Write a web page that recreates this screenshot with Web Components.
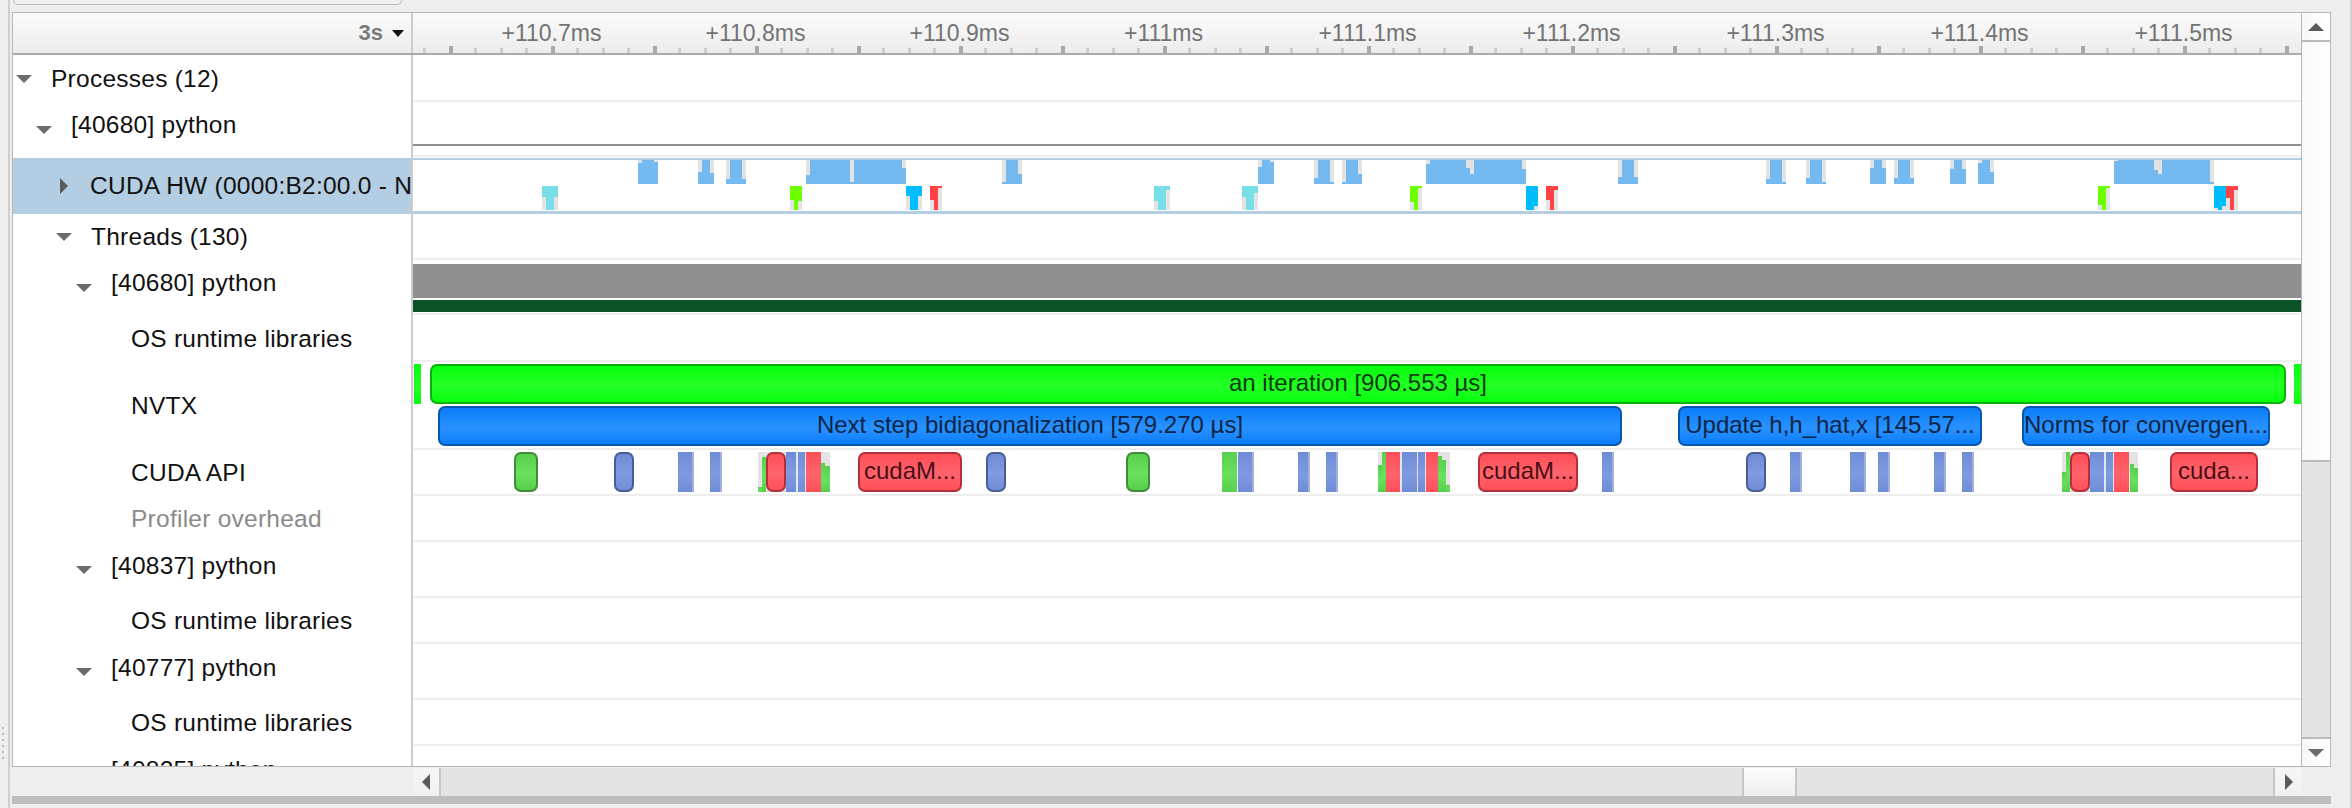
<!DOCTYPE html>
<html>
<head>
<meta charset="utf-8">
<title>Timeline</title>
<style>
  html, body { margin: 0; padding: 0; background: #eeeeee; overflow: hidden; }
  body { font-family: "Liberation Sans", Arial, sans-serif; }
</style>
</head>
<body>
<profiler-window>
  <ruler-header slot="header"></ruler-header>

  <tree-row depth="0" open height="47" lift="0">Processes (12)</tree-row>
  <tree-row depth="1" open height="56" lift="11" gap="1">[40680] python
    <tl-event slot="track" x1="413" x2="2302" top="42" h="2" kind="line"></tl-event>
  </tree-row>
  <tree-row depth="2" closed selected height="56">CUDA HW (0000:B2:00.0 - N
    <hw-track slot="track"></hw-track>
  </tree-row>
  <tree-row depth="2" open height="46">Threads (130)</tree-row>
  <tree-row depth="3" open height="55" lift="9">[40680] python
    <tl-event slot="track" x1="413" x2="2302" top="4" h="34" kind="line"></tl-event>
    <tl-event slot="track" x1="413" x2="2302" top="40" h="12" kind="state"></tl-event>
  </tree-row>
  <tree-row depth="4" height="47">OS runtime libraries</tree-row>
  <tree-row depth="4" height="88">NVTX
    <tl-event slot="track" x1="414" x2="421" top="2" h="40" kind="green" square></tl-event>
    <tl-event slot="track" x1="430" x2="2286" top="2" h="40" kind="green">an iteration [906.553 µs]</tl-event>
    <tl-event slot="track" x1="2294" x2="2301" top="2" h="40" kind="green" square></tl-event>
    <tl-event slot="track" x1="438" x2="1622" top="44" h="40" kind="blue">Next step bidiagonalization [579.270 µs]</tl-event>
    <tl-event slot="track" x1="1678" x2="1982" top="44" h="40" kind="blue">Update h,h_hat,x [145.57...</tl-event>
    <tl-event slot="track" x1="2022" x2="2270" top="44" h="40" kind="blue">Norms for convergen...</tl-event>
  </tree-row>
  <tree-row depth="4" height="46">CUDA API
    <tl-event slot="track" x1="514" x2="538" top="2" h="40" kind="api-green"></tl-event>
    <tl-event slot="track" x1="614" x2="634" top="2" h="40" kind="api-blue"></tl-event>
    <tl-event slot="track" x1="678" x2="694" top="2" h="40" kind="flat-blue" tail></tl-event>
    <tl-event slot="track" x1="710" x2="722" top="2" h="40" kind="flat-blue" tail></tl-event>

    <tl-event slot="track" x1="758" x2="830" top="2" h="40" kind="gray"></tl-event>
    <tl-event slot="track" x1="758" x2="762" top="37" h="5" kind="flat-green"></tl-event>
    <tl-event slot="track" x1="762" x2="766" top="7" h="35" kind="flat-green"></tl-event>
    <tl-event slot="track" x1="786" x2="796" top="2" h="40" kind="flat-blue"></tl-event>
    <tl-event slot="track" x1="798" x2="805" top="2" h="40" kind="flat-blue"></tl-event>
    <tl-event slot="track" x1="806" x2="821" top="2" h="40" kind="flat-red"></tl-event>
    <tl-event slot="track" x1="821" x2="825" top="13" h="29" kind="flat-green"></tl-event>
    <tl-event slot="track" x1="825" x2="830" top="16" h="26" kind="flat-green"></tl-event>
    <tl-event slot="track" x1="766" x2="786" top="2" h="40" kind="api-red"></tl-event>
    <tl-event slot="track" x1="858" x2="962" top="2" h="40" kind="api-red">cudaM...</tl-event>
    <tl-event slot="track" x1="986" x2="1006" top="2" h="40" kind="api-blue"></tl-event>

    <tl-event slot="track" x1="1126" x2="1150" top="2" h="40" kind="api-green"></tl-event>
    <tl-event slot="track" x1="1222" x2="1237" top="2" h="40" kind="flat-green"></tl-event>
    <tl-event slot="track" x1="1238" x2="1254" top="2" h="40" kind="flat-blue" tail></tl-event>
    <tl-event slot="track" x1="1298" x2="1310" top="2" h="40" kind="flat-blue" tail></tl-event>
    <tl-event slot="track" x1="1326" x2="1338" top="2" h="40" kind="flat-blue" tail></tl-event>

    <tl-event slot="track" x1="1378" x2="1450" top="2" h="40" kind="gray"></tl-event>
    <tl-event slot="track" x1="1378" x2="1382" top="15" h="27" kind="flat-green"></tl-event>
    <tl-event slot="track" x1="1382" x2="1386" top="2" h="40" kind="flat-green"></tl-event>
    <tl-event slot="track" x1="1386" x2="1400" top="2" h="40" kind="flat-red"></tl-event>
    <tl-event slot="track" x1="1402" x2="1417" top="2" h="40" kind="flat-blue"></tl-event>
    <tl-event slot="track" x1="1418" x2="1425" top="2" h="40" kind="flat-blue"></tl-event>
    <tl-event slot="track" x1="1426" x2="1438" top="2" h="40" kind="flat-red"></tl-event>
    <tl-event slot="track" x1="1438" x2="1442" top="6" h="36" kind="flat-green"></tl-event>
    <tl-event slot="track" x1="1442" x2="1446" top="10" h="32" kind="flat-green"></tl-event>
    <tl-event slot="track" x1="1446" x2="1450" top="35" h="7" kind="flat-green"></tl-event>
    <tl-event slot="track" x1="1478" x2="1578" top="2" h="40" kind="api-red">cudaM...</tl-event>
    <tl-event slot="track" x1="1602" x2="1614" top="2" h="40" kind="flat-blue" tail></tl-event>

    <tl-event slot="track" x1="1746" x2="1766" top="2" h="40" kind="api-blue"></tl-event>
    <tl-event slot="track" x1="1790" x2="1802" top="2" h="40" kind="flat-blue" tail></tl-event>
    <tl-event slot="track" x1="1850" x2="1866" top="2" h="40" kind="flat-blue" tail></tl-event>
    <tl-event slot="track" x1="1878" x2="1890" top="2" h="40" kind="flat-blue" tail></tl-event>
    <tl-event slot="track" x1="1934" x2="1946" top="2" h="40" kind="flat-blue" tail></tl-event>
    <tl-event slot="track" x1="1962" x2="1974" top="2" h="40" kind="flat-blue" tail></tl-event>

    <tl-event slot="track" x1="2062" x2="2138" top="2" h="40" kind="gray"></tl-event>
    <tl-event slot="track" x1="2062" x2="2066" top="22" h="20" kind="flat-green"></tl-event>
    <tl-event slot="track" x1="2066" x2="2070" top="2" h="40" kind="flat-green"></tl-event>
    <tl-event slot="track" x1="2090" x2="2104" top="2" h="40" kind="flat-blue"></tl-event>
    <tl-event slot="track" x1="2106" x2="2113" top="2" h="40" kind="flat-blue"></tl-event>
    <tl-event slot="track" x1="2114" x2="2129" top="2" h="40" kind="flat-red"></tl-event>
    <tl-event slot="track" x1="2130" x2="2134" top="14" h="28" kind="flat-green"></tl-event>
    <tl-event slot="track" x1="2134" x2="2138" top="18" h="24" kind="flat-green"></tl-event>
    <tl-event slot="track" x1="2070" x2="2090" top="2" h="40" kind="api-red"></tl-event>
    <tl-event slot="track" x1="2170" x2="2258" top="2" h="40" kind="api-red">cuda...</tl-event>
  </tree-row>
  <tree-row depth="4" height="46" muted>Profiler overhead</tree-row>
  <tree-row depth="3" open height="56" lift="9">[40837] python</tree-row>
  <tree-row depth="4" height="46">OS runtime libraries</tree-row>
  <tree-row depth="3" open height="56" lift="9">[40777] python</tree-row>
  <tree-row depth="4" height="46">OS runtime libraries</tree-row>
  <tree-row depth="3" height="56" lift="9">[40825] python</tree-row>
</profiler-window>

<script>
// track coordinates below are window x values, the track starts here
const TRACK_X = 413;

function arrowSvg(dir) {
  const shapes = {
    down: '<svg width="16" height="8" viewBox="0 0 16 8"><path d="M0 0H16L8 8Z" fill="#6b6b6b"/></svg>',
    right: '<svg width="8" height="16" viewBox="0 0 8 16"><path d="M0 0L8 8L0 16Z" fill="#5a5a5a"/></svg>',
    up: '<svg width="16" height="8" viewBox="0 0 16 8"><path d="M0 8H16L8 0Z" fill="#5a5a5a"/></svg>',
    left: '<svg width="8" height="16" viewBox="0 0 8 16"><path d="M8 0L0 8L8 16Z" fill="#5a5a5a"/></svg>'
  };
  return shapes[dir];
}

class ProfilerWindow extends HTMLElement {
  constructor() {
    super();
    this.attachShadow({ mode: 'open' });
    this.shadowRoot.innerHTML = `
      <style>
        :host {
          display: block;
          width: 2352px;
          height: 808px;
          box-sizing: border-box;
          padding: 0 21px 0 12px;
          overflow: hidden;
          font-family: "Liberation Sans", Arial, sans-serif;
          background:
            linear-gradient(#cfcfcf, #cfcfcf) 8px 0 / 2px 100% no-repeat,
            linear-gradient(#cfcfcf, #cfcfcf) 2350px 0 / 2px 100% no-repeat,
            repeating-linear-gradient(#bbb 0 2px, transparent 2px 6px) 2px 727px / 2px 34px no-repeat,
            #eeeeee;
        }
        .top { height: 12px; }
        .stub {
          width: 387px;
          height: 4px;
          margin-left: 1px;
          border: 1px solid #b8b8b8;
          border-top: 0;
          border-radius: 0 0 6px 6px;
          background: #f0f0f0;
        }
        .frame {
          height: 755px;
          box-sizing: border-box;
          border: 1px solid #b6b6b6;
          display: grid;
          grid-template-columns: 1fr 29px;
          background: #fff;
        }
        .main { min-width: 0; overflow: hidden; display: flex; flex-direction: column; }
        .rows { flex: 1; overflow: hidden; }
        .bottom { height: 28px; margin-top: 1px; display: flex; padding-left: 401px; width: 1889px; }
        .bar { height: 8px; background: #bdbdbd; width: 2319px; }
      </style>
      <div class="top"><div class="stub"></div></div>
      <div class="frame">
        <div class="main">
          <slot name="header"></slot>
          <div class="rows"><slot></slot></div>
        </div>
        <v-scrollbar></v-scrollbar>
      </div>
      <div class="bottom"><h-scrollbar></h-scrollbar></div>
      <div class="bar"></div>
    `;
  }
}

class RulerHeader extends HTMLElement {
  constructor() {
    super();
    this.attachShadow({ mode: 'open' });
    this.shadowRoot.innerHTML = `
      <style>
        :host {
          display: grid;
          grid-template-columns: 398px 2px 1fr;
          height: 42px;
          flex: none;
          box-sizing: border-box;
          border-bottom: 2px solid #ababab;
          background: linear-gradient(#fbfbfb, #ececec);
        }
        .zoom { display: flex; justify-content: flex-end; align-items: center; gap: 9px; padding: 0 7px 0 0; height: 40px; }
        .zoom b { font-size: 22px; color: #7a7a7a; }
        .split { background: #cccccc; }
        .scale { position: relative; overflow: hidden; }
        .label {
          position: absolute;
          top: 8px;
          transform: translateX(-50%);
          font-size: 23px;
          line-height: 24px;
          color: #737373;
          white-space: nowrap;
        }
        .tick { position: absolute; bottom: 0; }
        .tick.major { width: 4px; height: 7px; background: #a8a8a8; }
        .tick.minor { width: 3px; height: 5px; background: #cccccc; }
      </style>
      <div class="zoom"><b>3s</b>
        <svg width="12" height="7" viewBox="0 0 12 7"><path d="M0 0H12L6 7Z" fill="#111"/></svg>
      </div>
      <div class="split"></div>
      <div class="scale"></div>
    `;
    this._drawScale();
  }

  _drawScale() {
    const scale = this.shadowRoot.querySelector('.scale');
    const labels = ['+110.7ms', '+110.8ms', '+110.9ms', '+111ms', '+111.1ms', '+111.2ms', '+111.3ms', '+111.4ms', '+111.5ms'];
    // ticks every 25.5px, a big one every fourth
    for (let k = -5; k < 70; k++) {
      const x = Math.round(551.5 + k * 25.5) - TRACK_X;
      if (x < 8 || x > 1885) continue;
      const tick = document.createElement('div');
      tick.className = 'tick ' + (k % 4 === 0 ? 'major' : 'minor');
      tick.style.left = (x - 1) + 'px';
      scale.appendChild(tick);
    }
    labels.forEach((text, i) => {
      const label = document.createElement('div');
      label.className = 'label';
      label.textContent = text;
      label.style.left = (551.5 + i * 204 - TRACK_X) + 'px';
      scale.appendChild(label);
    });
  }
}

class TreeRow extends HTMLElement {
  constructor() {
    super();
    this.attachShadow({ mode: 'open' });
  }

  connectedCallback() {
    const depth = Number(this.getAttribute('depth') || 0);
    const height = this.getAttribute('height') || 46;
    const lift = this.getAttribute('lift') || 0;
    const gap = this.getAttribute('gap') || 0;
    const selected = this.hasAttribute('selected');
    let arrow = '';
    if (this.hasAttribute('open')) arrow = arrowSvg('down');
    if (this.hasAttribute('closed')) arrow = arrowSvg('right');

    this.shadowRoot.innerHTML = `
      <style>
        :host {
          display: grid;
          grid-template-columns: 398px 2px 1fr;
          height: ${height}px;
          font-size: 24.5px;
          letter-spacing: .25px;
          color: ${this.hasAttribute('muted') ? '#8a8a8a' : '#111111'};
        }
        .label {
          display: flex;
          align-items: center;
          min-width: 0;
          overflow: hidden;
          white-space: nowrap;
          padding-left: ${3 + depth * 20}px;
          background: ${selected ? '#b3cde3' : '#fff'};
        }
        .arrow { flex: none; width: 16px; display: flex; justify-content: center; margin-right: ${selected ? 18 : 19}px; }
        .text { margin-bottom: ${lift}px; }
        .split { background: #cccccc; }
        .track {
          position: relative;
          overflow: hidden;
          box-sizing: border-box;
          margin-bottom: ${gap}px;
          border-bottom: 2px solid #eeeeee;
        }
        .track.selected { border-top: 2px solid #b3cde3; border-bottom: 3px solid #b3cde3; margin: 0; }
      </style>
      <div class="label">
        <span class="arrow">${arrow}</span><span class="text"><slot></slot></span>
      </div>
      <div class="split"></div>
      <div class="track ${selected ? 'selected' : ''}"><slot name="track"></slot></div>
    `;
  }
}

class TlEvent extends HTMLElement {
  constructor() {
    super();
    this.attachShadow({ mode: 'open' });
  }

  connectedCallback() {
    const x1 = Number(this.getAttribute('x1'));
    const x2 = Number(this.getAttribute('x2'));
    const kind = this.getAttribute('kind');
    const looks = {
      line: 'background:#8f8f8f;',
      state: 'background:#0b5227;',
      gray: 'background:#e4e4e4;',
      green: 'background:linear-gradient(#06ff0c,#24ff26 55%,#06ff0c);border:2px solid #07b00a;color:#063d0a;',
      blue: 'background:linear-gradient(#0a7dfb,#2a92ff 55%,#0a7dfb);border:2px solid #0557ad;color:#0b2545;',
      'api-green': 'background:linear-gradient(#57cf4c,#6ae05f 55%,#57cf4c);border:2px solid #3f8c36;',
      'api-blue': 'background:linear-gradient(#6f8cd6,#7e9ae3 55%,#6f8cd6);border:2px solid #4a5c95;',
      'api-red': 'background:linear-gradient(#ff4f58,#ff636c 55%,#ff4f58);border:2px solid #b3303a;color:#4a0f14;',
      'flat-blue': 'background:linear-gradient(#6f8cd6,#7e9ae3 55%,#6f8cd6);',
      'flat-green': 'background:linear-gradient(#57cf4c,#6ae05f 55%,#57cf4c);',
      'flat-red': 'background:linear-gradient(#ff4f58,#ff636c 55%,#ff4f58);'
    };
    const rounded = kind === 'green' || kind === 'blue' || kind.startsWith('api-');
    let look = looks[kind];
    let radius = rounded ? 7 : 0;
    if (this.hasAttribute('square')) {
      look = 'background:linear-gradient(#06ff0c,#24ff26 55%,#06ff0c);';
      radius = 0;
    }
    if (this.hasAttribute('tail')) look += 'border-right:2px solid #a4b1d3;';

    this.shadowRoot.innerHTML = `
      <style>
        :host {
          position: absolute;
          left: ${x1 - TRACK_X}px;
          width: ${x2 - x1}px;
          top: ${this.getAttribute('top')}px;
          height: ${this.getAttribute('h')}px;
        }
        .box {
          box-sizing: border-box;
          width: 100%;
          height: 100%;
          padding-bottom: 2px;
          display: flex;
          align-items: center;
          justify-content: center;
          overflow: hidden;
          white-space: nowrap;
          font-size: 24px;
          letter-spacing: 0;
          border-radius: ${radius}px;
          ${look}
        }
      </style>
      <div class="box"><slot></slot></div>
    `;
  }
}

// two lanes of GPU work, each block is [x1, x2, [[cut x1, cut x2, y]...]]
const HW_UPPER = [
  [638, 658, [[638, 642, 163], [654, 658, 162]]],
  [698, 714, [[698, 702, 172], [710, 714, 173]]],
  [726, 746, [[726, 730, 179], [742, 746, 179]]],
  [806, 906, [[806, 810, 175], [850, 854, 182], [902, 906, 168]]],
  [1002, 1022, [[1002, 1006, 182], [1018, 1022, 174]]],
  [1258, 1274, [[1258, 1262, 167], [1270, 1274, 162]]],
  [1314, 1334, [[1314, 1318, 178], [1330, 1334, 182]]],
  [1342, 1362, [[1342, 1346, 182], [1358, 1362, 174]]],
  [1426, 1526, [[1426, 1430, 164], [1466, 1474, 168], [1470, 1474, 174], [1522, 1526, 169]]],
  [1618, 1638, [[1618, 1622, 177], [1634, 1638, 177]]],
  [1766, 1786, [[1766, 1770, 179], [1782, 1786, 182]]],
  [1806, 1826, [[1806, 1810, 178], [1822, 1826, 182]]],
  [1870, 1886, [[1870, 1874, 168], [1882, 1886, 168]]],
  [1894, 1914, [[1894, 1898, 178], [1910, 1914, 178]]],
  [1950, 1966, [[1950, 1954, 169], [1962, 1966, 169]]],
  [1978, 1994, [[1978, 1982, 163], [1990, 1994, 172]]],
  [2114, 2214, [[2114, 2118, 161], [2154, 2162, 170], [2158, 2162, 174], [2210, 2214, 182]]]
];
const CYAN = '#78dfe9', LIME = '#6bff00', SKY = '#00bdff', RED = '#ff4347';
const HW_LOWER = [
  [542, 558, CYAN, [[542, 546, 197], [554, 558, 197]]],
  [790, 802, LIME, [[790, 794, 200], [798, 802, 201]]],
  [906, 922, SKY, [[906, 910, 196], [918, 922, 196]]],
  [930, 942, RED, [[930, 934, 200], [938, 942, 188]]],
  [1154, 1170, CYAN, [[1154, 1158, 201], [1166, 1170, 190]]],
  [1242, 1258, CYAN, [[1242, 1246, 197], [1254, 1258, 193]]],
  [1410, 1422, LIME, [[1410, 1414, 202], [1418, 1422, 188]]],
  [1526, 1538, SKY, [[1534, 1538, 206]]],
  [1546, 1558, RED, [[1546, 1550, 200], [1554, 1558, 190]]],
  [2098, 2110, LIME, [[2098, 2102, 205], [2106, 2110, 188]]],
  [2214, 2226, SKY, [[2214, 2218, 208], [2222, 2226, 206]]],
  [2226, 2238, RED, [[2226, 2230, 198], [2234, 2238, 190]]]
];

class HwTrack extends HTMLElement {
  constructor() {
    super();
    this.attachShadow({ mode: 'open' });
    const rects = [];
    const rect = (x1, x2, y1, y2, fill) =>
      rects.push(`<rect x="${x1 - TRACK_X}" y="${y1 - 158}" width="${x2 - x1}" height="${y2 - y1}" fill="${fill}"/>`);
    HW_UPPER.forEach(([x1, x2, cuts]) => {
      rect(x1, x2, 160, 184, '#74b9f0');
      cuts.forEach(c => rect(c[0], c[1], 160, c[2], '#e3e3e3'));
    });
    HW_LOWER.forEach(([x1, x2, color, cuts]) => {
      rect(x1, x2, 186, 210, color);
      cuts.forEach(c => rect(c[0], c[1], c[2], 210, '#e3e3e3'));
    });
    this.shadowRoot.innerHTML = `
      <style>
        :host { position: absolute; left: 0; top: -2px; width: 1889px; height: 56px; }
        svg { display: block; shape-rendering: crispEdges; }
      </style>
      <svg width="1889" height="56">${rects.join('')}</svg>
    `;
  }
}

class VScrollbar extends HTMLElement {
  constructor() {
    super();
    this.attachShadow({ mode: 'open' });
    this.shadowRoot.innerHTML = `
      <style>
        :host {
          display: flex;
          flex-direction: column;
          box-sizing: border-box;
          border-left: 1px solid #b6b6b6;
          background: #fff;
          overflow: hidden;
        }
        .btn { height: 27px; display: flex; align-items: center; justify-content: center; flex: none; background: linear-gradient(90deg, #f7f7f7, #ffffff); }
        .thumb { height: 422px; flex: none; box-sizing: border-box; border-top: 2px solid #bbbbbb; border-bottom: 2px solid #bbbbbb; background: linear-gradient(90deg, #f8f8f8, #ffffff); }
        .rest { flex: 1; background: #e4e4e4; border-bottom: 2px solid #bbbbbb; }
      </style>
      <div class="btn">${arrowSvg('up')}</div>
      <div class="thumb"></div>
      <div class="rest"></div>
      <div class="btn">${arrowSvg('down')}</div>
    `;
  }
}

class HScrollbar extends HTMLElement {
  constructor() {
    super();
    this.attachShadow({ mode: 'open' });
    this.shadowRoot.innerHTML = `
      <style>
        :host { display: flex; width: 100%; height: 28px; background: #e4e4e4; }
        .btn { width: 26px; flex: none; display: flex; align-items: center; justify-content: center; background: linear-gradient(#f6f6f6, #f0f0f0); }
        .btn.l { border-right: 2px solid #c6c6c6; }
        .btn.r { width: 27px; border-left: 2px solid #c6c6c6; }
        .track { flex: 1; position: relative; }
        .thumb {
          position: absolute;
          left: 1301px;
          width: 55px;
          top: 0;
          bottom: 0;
          box-sizing: border-box;
          border-left: 2px solid #c6c6c6;
          border-right: 2px solid #c6c6c6;
          background: linear-gradient(#fbfbfb, #eeeeee);
        }
      </style>
      <div class="btn l">${arrowSvg('left')}</div>
      <div class="track"><div class="thumb"></div></div>
      <div class="btn r">${arrowSvg('right')}</div>
    `;
  }
}

customElements.define('profiler-window', ProfilerWindow);
customElements.define('ruler-header', RulerHeader);
customElements.define('tree-row', TreeRow);
customElements.define('tl-event', TlEvent);
customElements.define('hw-track', HwTrack);
customElements.define('v-scrollbar', VScrollbar);
customElements.define('h-scrollbar', HScrollbar);
</script>
</body>
</html>
